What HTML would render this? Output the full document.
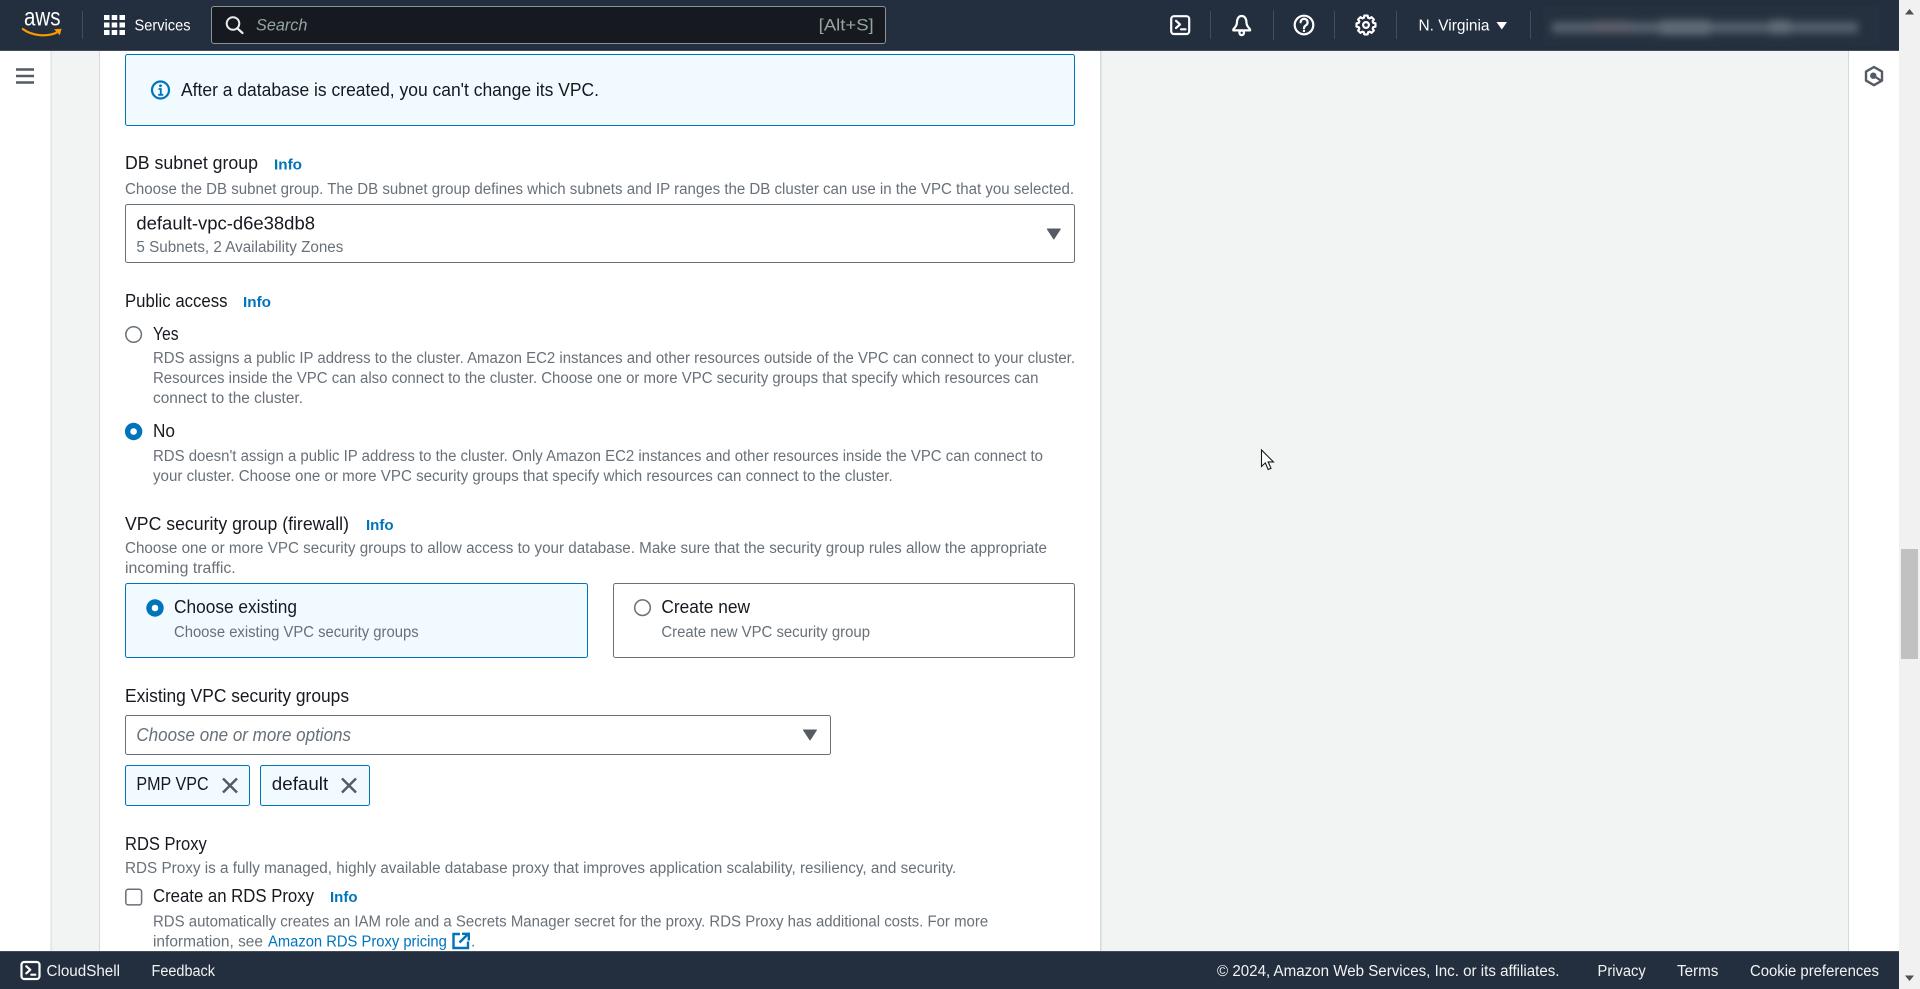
<!DOCTYPE html>
<html lang="en">
<head>
<meta charset="utf-8">
<title>RDS</title>
<style>
html,body{margin:0;padding:0;width:1920px;height:989px;overflow:hidden;background:#fff}
svg{display:block}
text{font-family:"Liberation Sans",Arial,sans-serif;white-space:pre}
.l{font-size:18px;fill:#16191f}
.d{font-size:15.5px;fill:#687078}
.i{font-size:15px;font-weight:700;fill:#0073bb}
.w{font-size:15.5px;fill:#f2f3f3}
.g{font-size:17px;fill:#95a5a6;font-style:italic}
.r{fill:#fff;stroke:#687078;stroke-width:1.5}
.box{fill:#fff;stroke:#687078;stroke-width:1}
.sel{fill:#f1faff;stroke:#0073bb;stroke-width:1}
.ic{fill:none;stroke:#fff;stroke-width:2.2;stroke-linecap:round;stroke-linejoin:round}
.dv{stroke:#414d5c;stroke-width:1}
</style>
</head>
<body>
<svg xmlns="http://www.w3.org/2000/svg" width="1920" height="989" viewBox="0 0 1920 989">
<defs><filter id="b" x="-10%" y="-150%" width="120%" height="400%"><feGaussianBlur stdDeviation="4"/></filter></defs>

<!-- backgrounds -->
<rect x="0" y="0" width="1920" height="989" fill="#ffffff"/>
<rect x="51" y="50" width="48" height="902" fill="#f2f3f3"/>
<rect x="1101" y="50" width="747" height="902" fill="#f2f3f3"/>
<rect x="50.500" y="50" width="1" height="902" fill="#d5dbdb"/>
<rect x="99" y="50" width="1" height="902" fill="#d5dbdb"/>
<rect x="1100" y="50" width="1.500" height="902" fill="#d5dbdb"/>
<rect x="1848" y="50" width="1" height="902" fill="#d5dbdb"/>

<!-- scrollbar -->
<rect x="1899" y="0" width="21" height="989" fill="#f1f1f1"/>
<rect x="1901" y="549" width="17" height="110" fill="#c1c1c1"/>
<path d="M1909.500 9l4.500 5.500h-9z" fill="#505050"/>
<path d="M1909.500 981l-4.500-5.500h9z" fill="#505050"/>

<!-- left & right rail icons -->
<path d="M16 69.500h18M16 76h18M16 82.500h18" stroke="#545b64" stroke-width="2.500" fill="none"/>
<path d="M1874 67l8 4.600v9l-8 4.600-8-4.600v-9z" fill="none" stroke="#545b64" stroke-width="2.400" stroke-linejoin="round"/>
<circle cx="1873.300" cy="75.700" r="3.200" fill="#545b64"/>
<path d="M1874 76l7 4.700" stroke="#545b64" stroke-width="2.200"/>

<!-- alert -->
<rect x="125.500" y="54.500" width="949" height="71" rx="2" class="sel"/>
<circle cx="160.500" cy="90" r="8.500" fill="none" stroke="#0073bb" stroke-width="2.200"/>
<circle cx="160.500" cy="85.800" r="1.400" fill="#0073bb"/>
<path d="M158.500 89h2.300v5.500M158.200 94.800h5" fill="none" stroke="#0073bb" stroke-width="1.800"/>
<text class="l" x="181" y="96" textLength="418" lengthAdjust="spacingAndGlyphs">After a database is created, you can't change its VPC.</text>

<!-- DB subnet group -->
<text class="l" x="125" y="169" textLength="133" lengthAdjust="spacingAndGlyphs">DB subnet group</text>
<text class="i" x="274" y="169.500" textLength="28" lengthAdjust="spacingAndGlyphs">Info</text>
<text class="d" x="125" y="194" textLength="949" lengthAdjust="spacingAndGlyphs">Choose the DB subnet group. The DB subnet group defines which subnets and IP ranges the DB cluster can use in the VPC that you selected.</text>
<rect x="125.500" y="204.500" width="949" height="58" rx="2" class="box"/>
<text class="l" x="136.400" y="229.500" textLength="178.600" lengthAdjust="spacingAndGlyphs">default-vpc-d6e38db8</text>
<text class="d" x="136.400" y="252" textLength="207" lengthAdjust="spacingAndGlyphs">5 Subnets, 2 Availability Zones</text>
<path d="M1047.300 229h13l-6.500 10z" fill="#545b64" stroke="#545b64" stroke-linejoin="round"/>

<!-- Public access -->
<text class="l" x="125" y="307" textLength="102.500" lengthAdjust="spacingAndGlyphs">Public access</text>
<text class="i" x="243" y="307" textLength="28" lengthAdjust="spacingAndGlyphs">Info</text>
<circle cx="133.600" cy="334.500" r="7.800" class="r"/>
<text class="l" x="153" y="340" textLength="25.600" lengthAdjust="spacingAndGlyphs">Yes</text>
<text class="d" x="153" y="363" textLength="922" lengthAdjust="spacingAndGlyphs">RDS assigns a public IP address to the cluster. Amazon EC2 instances and other resources outside of the VPC can connect to your cluster.</text>
<text class="d" x="153" y="383" textLength="885.400" lengthAdjust="spacingAndGlyphs">Resources inside the VPC can also connect to the cluster. Choose one or more VPC security groups that specify which resources can</text>
<text class="d" x="153" y="403" textLength="150" lengthAdjust="spacingAndGlyphs">connect to the cluster.</text>
<circle cx="133.600" cy="431.500" r="8.700" fill="#0073bb"/>
<circle cx="133.600" cy="431.500" r="3.300" fill="#fff"/>
<text class="l" x="153" y="437" textLength="22" lengthAdjust="spacingAndGlyphs">No</text>
<text class="d" x="153" y="461" textLength="890" lengthAdjust="spacingAndGlyphs">RDS doesn't assign a public IP address to the cluster. Only Amazon EC2 instances and other resources inside the VPC can connect to</text>
<text class="d" x="153" y="481" textLength="739.700" lengthAdjust="spacingAndGlyphs">your cluster. Choose one or more VPC security groups that specify which resources can connect to the cluster.</text>

<!-- VPC security group -->
<text class="l" x="125" y="530" textLength="224" lengthAdjust="spacingAndGlyphs">VPC security group (firewall)</text>
<text class="i" x="366" y="530" textLength="27.600" lengthAdjust="spacingAndGlyphs">Info</text>
<text class="d" x="125" y="553" textLength="922" lengthAdjust="spacingAndGlyphs">Choose one or more VPC security groups to allow access to your database. Make sure that the security group rules allow the appropriate</text>
<text class="d" x="125" y="573" textLength="110.700" lengthAdjust="spacingAndGlyphs">incoming traffic.</text>

<rect x="125.500" y="583.500" width="462" height="74" rx="2" class="sel"/>
<circle cx="155" cy="608" r="8.700" fill="#0073bb"/>
<circle cx="155" cy="608" r="3.300" fill="#fff"/>
<text class="l" x="174" y="613" textLength="123" lengthAdjust="spacingAndGlyphs">Choose existing</text>
<text class="d" x="174" y="637" textLength="244.600" lengthAdjust="spacingAndGlyphs">Choose existing VPC security groups</text>

<rect x="613.500" y="583.500" width="461" height="74" rx="2" class="box"/>
<circle cx="642.500" cy="607.700" r="7.800" class="r"/>
<text class="l" x="661.400" y="613" textLength="88.600" lengthAdjust="spacingAndGlyphs">Create new</text>
<text class="d" x="661.400" y="637" textLength="208.600" lengthAdjust="spacingAndGlyphs">Create new VPC security group</text>

<!-- Existing groups -->
<text class="l" x="125" y="702" textLength="224" lengthAdjust="spacingAndGlyphs">Existing VPC security groups</text>
<rect x="125.500" y="715.500" width="705" height="39" rx="2" class="box"/>
<text class="l" x="136.400" y="741" textLength="214.600" lengthAdjust="spacingAndGlyphs" style="fill:#687078;font-style:italic">Choose one or more options</text>
<path d="M803.500 730h13l-6.500 10z" fill="#545b64" stroke="#545b64" stroke-linejoin="round"/>

<rect x="125.500" y="765.500" width="124" height="40" rx="2" class="sel"/>
<text class="l" x="136.400" y="790" textLength="72.200" lengthAdjust="spacingAndGlyphs">PMP VPC</text>
<path d="M223 778.500l14 14M237 778.500l-14 14" stroke="#545b64" stroke-width="2.500" fill="none"/>
<rect x="260.500" y="765.500" width="109" height="40" rx="2" class="sel"/>
<text class="l" x="271.800" y="790" textLength="56.400" lengthAdjust="spacingAndGlyphs">default</text>
<path d="M342 778.500l14 14M356 778.500l-14 14" stroke="#545b64" stroke-width="2.500" fill="none"/>

<!-- RDS Proxy -->
<text class="l" x="125" y="850" textLength="81.800" lengthAdjust="spacingAndGlyphs">RDS Proxy</text>
<text class="d" x="125" y="873" textLength="831.300" lengthAdjust="spacingAndGlyphs">RDS Proxy is a fully managed, highly available database proxy that improves application scalability, resiliency, and security.</text>
<rect x="125.800" y="889.300" width="15.800" height="15.600" rx="2.500" class="r"/>
<text class="l" x="153" y="902" textLength="161" lengthAdjust="spacingAndGlyphs">Create an RDS Proxy</text>
<text class="i" x="330" y="902" textLength="27.500" lengthAdjust="spacingAndGlyphs">Info</text>
<text class="d" x="153" y="926.300" textLength="835.200" lengthAdjust="spacingAndGlyphs">RDS automatically creates an IAM role and a Secrets Manager secret for the proxy. RDS Proxy has additional costs. For more</text>
<text class="d" x="153" y="946.300" textLength="110" lengthAdjust="spacingAndGlyphs">information, see</text>
<text class="d" x="268" y="946.300" textLength="178.800" lengthAdjust="spacingAndGlyphs" style="fill:#0073bb">Amazon RDS Proxy pricing</text>
<path d="M460 934h-6.500v14h14.500v-6.500" fill="none" stroke="#0073bb" stroke-width="2.400"/>
<path d="M459.500 942.500L468 934M462 933.800h6.800v6.700" fill="none" stroke="#0073bb" stroke-width="2.400"/>
<text class="d" x="471" y="946.300">.</text>

<!-- cursor -->
<path d="M1261.500 450v16.500l3.800-3.600 2.900 6.600 2.800-1.200-2.900-6.400h5.300z" fill="#fff" stroke="#16191f" stroke-width="1.100" stroke-linejoin="miter"/>

<!-- top bar -->
<rect x="0" y="0" width="1899" height="50" fill="#232f3e"/>
<rect x="0" y="50" width="1899" height="1" fill="#414d5c"/>
<text x="24" y="25.500" font-size="25" fill="#fff" textLength="36.500" lengthAdjust="spacingAndGlyphs">aws</text>
<path d="M22.800 29C32 36 48 37.500 58 31.800" fill="none" stroke="#ff9900" stroke-width="2.200" stroke-linecap="round"/>
<path d="M54 29.300l7.600-.5-1.800 6.500z" fill="#ff9900"/>
<line class="dv" x1="82.500" y1="11" x2="82.500" y2="39"/>
<g fill="#fff">
<rect x="104" y="15" width="5.500" height="5"/><rect x="111.700" y="15" width="5.500" height="5"/><rect x="119.500" y="15" width="5.500" height="5"/>
<rect x="104" y="22.500" width="5.500" height="5"/><rect x="111.700" y="22.500" width="5.500" height="5"/><rect x="119.500" y="22.500" width="5.500" height="5"/>
<rect x="104" y="30" width="5.500" height="5"/><rect x="111.700" y="30" width="5.500" height="5"/><rect x="119.500" y="30" width="5.500" height="5"/>
</g>
<text class="w" x="134.500" y="30.500" textLength="56" lengthAdjust="spacingAndGlyphs" style="fill:#fff;font-size:16px">Services</text>

<rect x="211.500" y="6.500" width="674" height="37" rx="2.500" fill="#16191f" stroke="#879596" stroke-width="1"/>
<circle cx="233" cy="23.500" r="6.300" fill="none" stroke="#eaeded" stroke-width="2"/>
<path d="M237.500 28.500l5 4.500" stroke="#eaeded" stroke-width="2.200" stroke-linecap="round"/>
<text class="g" x="256" y="30.500" textLength="51.400" lengthAdjust="spacingAndGlyphs">Search</text>
<text x="818.700" y="30.500" font-size="17" fill="#95a5a6" textLength="55" lengthAdjust="spacingAndGlyphs">[Alt+S]</text>

<!-- cloudshell -->
<rect x="1171.200" y="16.200" width="18" height="17.800" rx="2.800" class="ic"/>
<path d="M1176 20.800l4 3.600-4 3.600" class="ic" stroke-width="1.900"/>
<path d="M1181 29.300h4.500" class="ic" stroke-width="1.900"/>
<line class="dv" x1="1210.500" y1="11" x2="1210.500" y2="39"/>
<!-- bell -->
<path d="M1241.700 16c-3.400 0-4.800 3.400-4.800 6.800 0 3-2.200 5-3.600 6.600v1h16.800v-1c-1.400-1.600-3.600-3.600-3.600-6.600 0-3.400-1.400-6.800-4.800-6.800z" class="ic"/>
<circle cx="1241.700" cy="32.800" r="2.300" class="ic" stroke-width="1.800"/>
<line class="dv" x1="1273.500" y1="10" x2="1273.500" y2="40"/>
<!-- help -->
<circle cx="1304" cy="25" r="9.300" class="ic"/>
<path d="M1300.600 22.300a3.500 3.500 0 1 1 5.300 3c-1.300.8-1.900 1.500-1.900 2.900" class="ic" stroke-width="2"/>
<circle cx="1304" cy="31" r="1.200" fill="#fff"/>
<line class="dv" x1="1334.500" y1="11" x2="1334.500" y2="39"/>
<!-- gear -->
<polygon transform="translate(1366 25)" class="ic" stroke-width="2" points="9.450,-1.670 9.450,1.670 7.310,2.090 6.650,3.680 7.860,5.510 5.510,7.860 3.680,6.650 2.090,7.310 1.670,9.450 -1.670,9.450 -2.090,7.310 -3.680,6.650 -5.510,7.860 -7.860,5.510 -6.650,3.680 -7.310,2.090 -9.450,1.670 -9.450,-1.670 -7.310,-2.090 -6.650,-3.680 -7.860,-5.510 -5.510,-7.860 -3.680,-6.650 -2.090,-7.310 -1.670,-9.450 1.670,-9.450 2.090,-7.310 3.680,-6.650 5.510,-7.860 7.860,-5.510 6.650,-3.680 7.310,-2.090"/>
<circle cx="1366" cy="25" r="2.900" class="ic" stroke-width="1.900"/>
<line class="dv" x1="1396.500" y1="11" x2="1396.500" y2="39"/>
<text class="w" x="1418.500" y="30.500" textLength="71" lengthAdjust="spacingAndGlyphs" style="fill:#fff;font-size:16px">N. Virginia</text>
<path d="M1496.500 22h10.500l-5.200 7.500z" fill="#fff"/>
<line class="dv" x1="1530.500" y1="11" x2="1530.500" y2="39"/>

<!-- blurred account -->
<rect x="1543" y="6" width="336" height="40" fill="#25313f"/>
<g filter="url(#b)">
<rect x="1552" y="22" width="306" height="11" fill="#565f6c"/>
<rect x="1595" y="21" width="35" height="12" fill="#5d5f6a"/>
<rect x="1660" y="20" width="50" height="15" fill="#5f6a76"/>
<rect x="1770" y="20" width="20" height="14" fill="#5f6a76"/>
</g>

<!-- bottom bar -->
<rect x="0" y="951" width="1899" height="38" fill="#232f3e"/>
<rect x="0" y="951" width="1899" height="1" fill="#414d5c"/>
<rect x="21.500" y="962" width="18" height="17" rx="2.800" class="ic"/>
<path d="M26.300 966.300l4 3.500-4 3.500M31.300 974.700h4" class="ic" stroke-width="1.900"/>
<text class="w" x="46.500" y="976" textLength="73.500" lengthAdjust="spacingAndGlyphs">CloudShell</text>
<text class="w" x="151.500" y="976" textLength="63.500" lengthAdjust="spacingAndGlyphs">Feedback</text>
<text class="w" x="1217" y="976" textLength="342.500" lengthAdjust="spacingAndGlyphs">© 2024, Amazon Web Services, Inc. or its affiliates.</text>
<text class="w" x="1597.500" y="976" textLength="48.300" lengthAdjust="spacingAndGlyphs">Privacy</text>
<text class="w" x="1677" y="976" textLength="41.400" lengthAdjust="spacingAndGlyphs">Terms</text>
<text class="w" x="1750" y="976" textLength="129" lengthAdjust="spacingAndGlyphs">Cookie preferences</text>
</svg>
</body>
</html>
